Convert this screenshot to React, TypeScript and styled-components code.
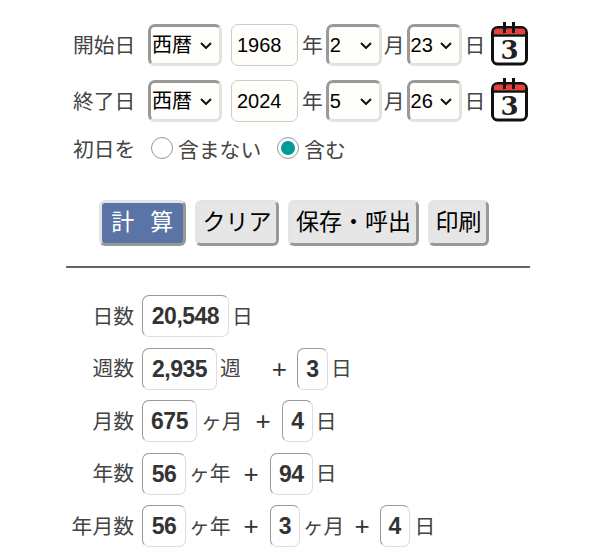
import React from "react";
import styled, { createGlobalStyle } from "styled-components";

const chevron =
  "data:image/svg+xml,%3Csvg xmlns='http://www.w3.org/2000/svg' width='12' height='7' viewBox='0 0 12 7'%3E%3Cpath d='M1 1l5 5 5-5' fill='none' stroke='%23111' stroke-width='2'/%3E%3C/svg%3E";

const Global = createGlobalStyle`
  html, body { margin: 0; padding: 0; background: #fff; }
  body { font-family: "Liberation Sans", "Noto Sans CJK JP", sans-serif; font-size: 20.8px; color: #444; }
`;

const Page = styled.div`
  width: 464px;
  margin-left: 66px;
  padding-top: 24px;
`;

const DateRow = styled.div`
  display: flex;
  align-items: center;
  height: 42px;
  margin-bottom: 14px;
  padding-left: 7px;
`;

const Label = styled.span`
  width: 61px;
  margin-right: 14px;
  padding-bottom: 3px;
  white-space: nowrap;
`;

const Unit = styled.span<{ $l?: number }>`
  flex: none;
  margin-left: ${(p) => p.$l ?? 3}px;
  padding-bottom: 3px;
  white-space: nowrap;
`;

const Select = styled.select<{ $w: number; $l?: number }>`
  appearance: none;
  flex: none;
  width: ${(p) => p.$w}px;
  height: 42px;
  margin: 0 0 0 ${(p) => p.$l ?? 0}px;
  padding: 0 0 0 1px;
  box-sizing: border-box;
  border: 3px solid;
  border-color: #999 #e2e2e2 #e2e2e2 #999;
  border-radius: 7px;
  background: #fffefa url("${chevron}") no-repeat right 7px center;
  color: #000;
  font: 20px "Liberation Sans", "Noto Sans CJK JP", sans-serif;
`;

const YearInput = styled.input`
  flex: none;
  width: 67px;
  height: 42px;
  margin-left: 9px;
  padding: 0 0 0 5px;
  box-sizing: border-box;
  border: 1px solid #ccc;
  border-radius: 7px;
  background: #fffefa;
  color: #000;
  font: 20px "Liberation Sans", sans-serif;
`;

const CalendarIcon = styled.svg`
  width: 37px;
  height: 44px;
  margin: 0 0 2px 6px;
  flex: none;
`;

const Calendar = () => (
  <CalendarIcon viewBox="0 0 37 44">
    <rect x="1.5" y="5.5" width="34" height="36.5" rx="5" fill="#fff" stroke="#111" strokeWidth="3" />
    <path d="M3 12.5V9.5a3 3 0 0 1 3-3h25a3 3 0 0 1 3 3v3z" fill="#e8403a" />
    <path d="M2 13.5h33" stroke="#111" strokeWidth="2.5" />
    <path d="M13.5 0v11M22.5 0v11" stroke="#111" strokeWidth="3" />
    <text x="18.5" y="37" textAnchor="middle" fontFamily="'DejaVu Serif', serif" fontWeight="700" fontSize="26" fill="#222">
      3
    </text>
  </CalendarIcon>
);

const RadioRow = styled.div`
  display: flex;
  align-items: center;
  height: 26px;
  padding-left: 7px;
`;

const RadioLead = styled(Label)`
  margin-right: 17px;
`;

const Radio = styled.input.attrs({ type: "radio" })`
  appearance: none;
  flex: none;
  width: 22px;
  height: 22px;
  margin: 0 5px 3px 0;
  padding: 3px;
  box-sizing: border-box;
  border: 1px solid #999;
  border-radius: 50%;
  background: #fff content-box;
  &:checked { background-color: #009a97; }
`;

const RadioLabel = styled.label`
  display: flex;
  align-items: center;
  margin-right: 16px;
  white-space: nowrap;
`;

const ButtonBar = styled.div`
  display: flex;
  gap: 9px;
  margin-top: 38px;
  padding-left: 33px;
`;

const Button = styled.button<{ $primary?: boolean; $w: number }>`
  width: ${(p) => p.$w}px;
  height: 46px;
  padding: 0 ${(p) => (p.$primary ? "4px" : "0")} 7px 0;
  box-sizing: border-box;
  border: 3px solid;
  border-color: #e4e4e4 #999 #999 #e4e4e4;
  border-radius: 6px;
  background: ${(p) => (p.$primary ? "#5a74a5" : "#e6e6e6")};
  color: ${(p) => (p.$primary ? "#fff" : "#000")};
  font: 23px "Noto Sans CJK JP", sans-serif;
  letter-spacing: ${(p) => (p.$primary ? "-3.5px" : "0")};
  white-space: pre;
`;

const Divider = styled.hr`
  height: 2px;
  margin: 20px 0 27px;
  border: 0;
  background: #666;
`;

const Results = styled.div`
  display: flex;
  flex-direction: column;
  gap: 10.5px;
`;

const ResultRow = styled.div`
  display: flex;
  align-items: center;
  height: 42px;
`;

const ResultLabel = styled.span`
  width: 68px;
  margin-right: 8px;
  padding-bottom: 3px;
  text-align: right;
  white-space: nowrap;
`;

const Value = styled.output<{ $w: number; $l?: number }>`
  display: block;
  flex: none;
  width: ${(p) => p.$w}px;
  height: 42px;
  margin-left: ${(p) => p.$l ?? 0}px;
  box-sizing: border-box;
  border: 1px solid;
  border-color: #999 #ddd #ddd #999;
  border-radius: 7px;
  font: 700 23px/40px "Liberation Sans", sans-serif;
  letter-spacing: -0.5px;
  color: #333;
  text-align: center;
`;

const Plus = styled.span<{ $l: number }>`
  flex: none;
  margin-left: ${(p) => p.$l}px;
  font: 26px/1 "Liberation Sans", sans-serif;
  color: #333;
`;

const DateFields = ({ year, month, day }: { year: string; month: string; day: string }) => (
  <>
    <Select $w={74} defaultValue="西暦">
      <option>西暦</option>
    </Select>
    <YearInput defaultValue={year} />
    <Unit $l={4}>年</Unit>
    <Select $w={56} $l={3} defaultValue={month}>
      <option>{month}</option>
    </Select>
    <Unit $l={2}>月</Unit>
    <Select $w={55} $l={2} defaultValue={day}>
      <option>{day}</option>
    </Select>
    <Unit $l={3}>日</Unit>
    <Calendar />
  </>
);

export default function App() {
  return (
    <>
      <Global />
      <Page>
        <DateRow>
          <Label>開始日</Label>
          <DateFields year="1968" month="2" day="23" />
        </DateRow>
        <DateRow>
          <Label>終了日</Label>
          <DateFields year="2024" month="5" day="26" />
        </DateRow>
        <RadioRow>
          <RadioLead>初日を</RadioLead>
          <RadioLabel>
            <Radio name="first" />
            含まない
          </RadioLabel>
          <RadioLabel>
            <Radio name="first" defaultChecked />
            含む
          </RadioLabel>
        </RadioRow>
        <ButtonBar>
          <Button $primary $w={87}>計　算</Button>
          <Button $w={84}>クリア</Button>
          <Button $w={131}>保存・呼出</Button>
          <Button $w={61}>印刷</Button>
        </ButtonBar>
        <Divider />
        <Results>
          <ResultRow>
            <ResultLabel>日数</ResultLabel>
            <Value $w={87}>20,548</Value>
            <Unit>日</Unit>
          </ResultRow>
          <ResultRow>
            <ResultLabel>週数</ResultLabel>
            <Value $w={75}>2,935</Value>
            <Unit>週</Unit>
            <Plus $l={31}>+</Plus>
            <Value $w={31} $l={10}>3</Value>
            <Unit>日</Unit>
          </ResultRow>
          <ResultRow>
            <ResultLabel>月数</ResultLabel>
            <Value $w={55}>675</Value>
            <Unit $l={4}>ヶ月</Unit>
            <Plus $l={13}>+</Plus>
            <Value $w={31} $l={11}>4</Value>
            <Unit>日</Unit>
          </ResultRow>
          <ResultRow>
            <ResultLabel>年数</ResultLabel>
            <Value $w={44}>56</Value>
            <Unit $l={3}>ヶ年</Unit>
            <Plus $l={13}>+</Plus>
            <Value $w={43} $l={11}>94</Value>
            <Unit>日</Unit>
          </ResultRow>
          <ResultRow>
            <ResultLabel>年月数</ResultLabel>
            <Value $w={44}>56</Value>
            <Unit $l={3}>ヶ年</Unit>
            <Plus $l={13}>+</Plus>
            <Value $w={30} $l={11}>3</Value>
            <Unit $l={3}>ヶ月</Unit>
            <Plus $l={10}>+</Plus>
            <Value $w={30} $l={10}>4</Value>
            <Unit $l={5}>日</Unit>
          </ResultRow>
        </Results>
      </Page>
    </>
  );
}
